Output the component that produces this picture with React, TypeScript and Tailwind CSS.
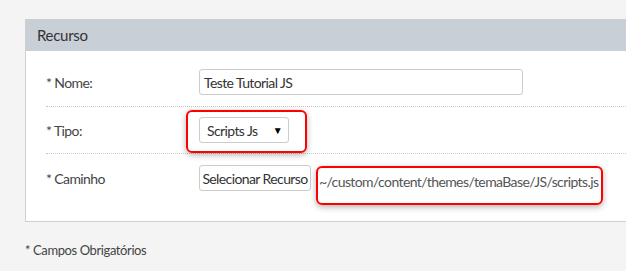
import React from "react";

export default function App() {
  const font = { fontFamily: "Lato, 'Liberation Sans', sans-serif" };
  return (
    <div className="w-[626px] h-[271px] bg-[#f4f4f4] overflow-hidden pt-[19px]" style={font}>
      <div className="ml-[25px] w-[700px] border border-[#cfcfcf] bg-white">
        <div className="h-[31px] bg-[#c9cfd6] flex items-center pl-[11px] text-[15px] text-[#333] tracking-[-0.3px]">Recurso</div>
        <div className="pl-[20px] pt-[18px] pb-[16px] text-[14px] tracking-[-0.6px]">
          <div className="flex items-center pb-[11px] border-b border-dotted border-[#c8c8c8]">
            <div className="w-[153px] text-[#444]">* Nome:</div>
            <div className="w-[324px] h-[26px] border border-[#ccc] rounded-[3px] flex items-center pl-[4px] text-[#333]">Teste Tutorial JS</div>
          </div>
          <div className="flex items-center py-[10px] border-b border-dotted border-[#c8c8c8]">
            <div className="w-[153px] text-[#444]">* Tipo:</div>
            <div className="relative">
              <div className="absolute left-[-13px] top-[-7px] w-[121px] h-[43px] border-2 border-[#ff0000] rounded-[6px] shadow-[0_2px_6px_rgba(0,0,0,0.3)]"></div>
              <div className="relative w-[90px] h-[26px] border border-[#ccc] rounded-[3px] flex items-center justify-between pl-[7px] pr-[6px] text-[#333] bg-white">
                <span>Scripts Js</span>
                <span className="text-[10px] text-black">▼</span>
              </div>
            </div>
          </div>
          <div className="flex items-start pt-[11px]">
            <div className="w-[153px] h-[26px] flex items-center text-[#444]">* Caminho</div>
            <div className="h-[26px] w-[112px] border border-[#ccc] rounded-[3px] flex items-center justify-center text-[#333] whitespace-nowrap">Selecionar Recurso</div>
            <div className="ml-[5px] mt-[1px] w-[287px] h-[39px] border-2 border-[#ff0000] rounded-[6px] shadow-[0_2px_6px_rgba(0,0,0,0.3)] pl-[1px] pt-[3px] text-[#555] whitespace-nowrap">~/custom/content/themes/temaBase/JS/scripts.js</div>
          </div>
        </div>
      </div>
      <div className="ml-[25px] mt-[19px] text-[13px] text-[#444] tracking-[-0.4px]">* Campos Obrigatórios</div>
    </div>
  );
}
